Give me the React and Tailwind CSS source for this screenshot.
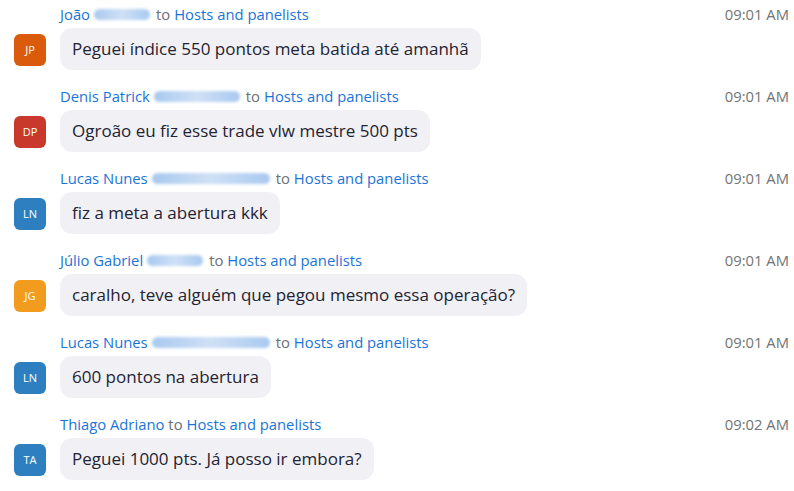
import React from "react";

const msgs = [
  { init: "JP", bg: "bg-[#db5b0d]", name: "João", blur: 56, text: "Peguei índice 550 pontos meta batida até amanhã", time: "09:01 AM" },
  { init: "DP", bg: "bg-[#c8392b]", name: "Denis Patrick", blur: 86, text: "Ogroão eu fiz esse trade vlw mestre 500 pts", time: "09:01 AM" },
  { init: "LN", bg: "bg-[#2d7fc0]", name: "Lucas Nunes", blur: 118, text: "fiz a meta a abertura kkk", time: "09:01 AM" },
  { init: "JG", bg: "bg-[#f29c1f]", name: "Júlio Gabriel", blur: 56, text: "caralho, teve alguém que pegou mesmo essa operação?", time: "09:01 AM" },
  { init: "LN", bg: "bg-[#2d7fc0]", name: "Lucas Nunes", blur: 118, text: "600 pontos na abertura", time: "09:01 AM" },
  { init: "TA", bg: "bg-[#2d7fc0]", name: "Thiago Adriano", blur: 0, text: "Peguei 1000 pts. Já posso ir embora?", time: "09:02 AM" },
];

export default function App() {
  return (
    <div className="w-[794px] h-[491px] bg-white overflow-hidden pt-[4px] font-['Open_Sans',sans-serif]">
      {msgs.map((m, i) => (
        <div key={i} className="flex flex-col h-[82px]">
          <div className="flex items-center h-[20px] pl-[60px] pr-[5px] text-[14.8px] leading-[20px]">
            <span className="text-[#1a74d8]">{m.name}</span>
            {m.blur > 0 ? (
              <span
                className="inline-block h-[11px] ml-[4px] mr-[2px] rounded-full bg-gradient-to-r from-[#a8c9ef] via-[#cfe0f5] to-[#a8c9ef] blur-[1.5px]"
                style={{ width: m.blur }}
              />
            ) : null}
            <span className="text-[#6b6f76] ml-[4px]">to</span>
            <span className="text-[#1a74d8] ml-[4px]">Hosts and panelists</span>
            <span className="ml-auto text-[#737373]">{m.time}</span>
          </div>
          <div className="flex items-center mt-[4px] pl-[14px]">
            <div className={`w-[32px] h-[32px] rounded-[6px] ${m.bg} flex items-center justify-center text-white text-[11px] mt-[2px]`}>
              {m.init}
            </div>
            <div className="ml-[14px] h-[42px] flex items-center px-[12px] rounded-[12px] bg-[#f1f1f5] text-[#232333] text-[17px]">
              {m.text}
            </div>
          </div>
        </div>
      ))}
    </div>
  );
}
